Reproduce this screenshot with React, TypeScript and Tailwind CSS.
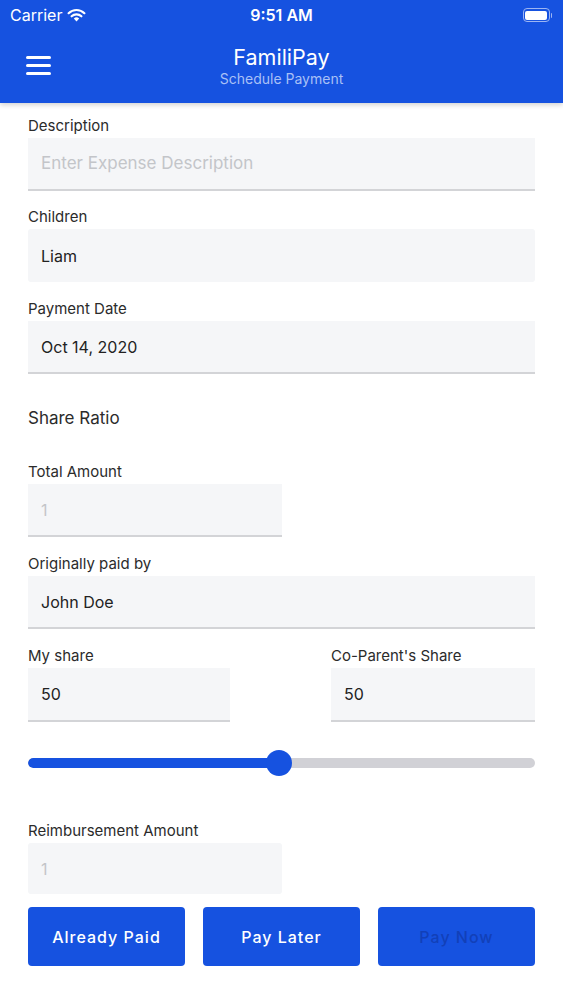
import React from "react";

function Field({
  label,
  value,
  placeholder,
  muted,
  border = true,
  className = "",
  inputW = "w-full",
  h = "h-[53px]",
}: {
  label: string;
  value?: string;
  placeholder?: string;
  muted?: boolean;
  border?: boolean;
  className?: string;
  inputW?: string;
  h?: string;
}) {
  return (
    <div className={className}>
      <div className="h-[20px] text-[15px] leading-[20px] text-[#2b2b2b]">{label}</div>
      <div
        className={`${inputW} mt-[2px] ${h} bg-[#f5f6f8] flex items-center pl-[13px] ${
          placeholder ? "text-[17px]" : "text-[16px]"
        } ${border ? "border-b-[2px] border-[#d3d4d7]" : "rounded-[3px]"} ${
          placeholder || muted ? "text-[#c3c5c9]" : "text-[#222222]"
        }`}
      >
        {value ?? placeholder}
      </div>
    </div>
  );
}

export default function App() {
  return (
    <div
      className="w-[563px] h-[1000px] bg-white overflow-hidden"
      style={{ fontFamily: "Inter, 'Noto Sans', sans-serif" }}
    >
      <header className="relative z-10 bg-[#1652e0] h-[103px] shadow-[0_2px_5px_rgba(0,0,0,0.18)] text-white">
        <div className="h-[30px] flex items-center justify-between px-[10px]">
          <div className="flex items-center gap-[5px] w-[120px]">
            <span className="text-[16px]">Carrier</span>
            <svg width="19" height="14" viewBox="0 0 19 14">
              <path d="M9.5 13.5 L6.8 10.6 A3.9 3.9 0 0 1 12.2 10.6 Z" fill="white" />
              <path d="M4.6 8.3 A7 7 0 0 1 14.4 8.3" stroke="white" strokeWidth="2.2" fill="none" strokeLinecap="round" />
              <path d="M1.6 5.2 A11.3 11.3 0 0 1 17.4 5.2" stroke="white" strokeWidth="2.2" fill="none" strokeLinecap="round" />
            </svg>
          </div>
          <span className="text-[16px] font-semibold">9:51 AM</span>
          <div className="w-[120px] flex justify-end pr-[1px]">
            <div className="flex items-center">
              <div className="w-[27px] h-[14px] rounded-[4px] border-[1.5px] border-[#9db5f2] p-[1.5px]">
                <div className="w-full h-full bg-white rounded-[2px]" />
              </div>
              <div className="w-[1.5px] h-[5px] bg-[#9db5f2] rounded-r ml-[1px]" />
            </div>
          </div>
        </div>
        <div className="relative h-[73px]">
          <div className="absolute left-[26px] top-[26px] flex flex-col gap-[5.5px]">
            <div className="w-[25px] h-[2.5px] bg-white rounded" />
            <div className="w-[25px] h-[2.5px] bg-white rounded" />
            <div className="w-[25px] h-[2.5px] bg-white rounded" />
          </div>
          <div className="flex flex-col items-center pt-[14px]">
            <div className="text-[21.5px] leading-[26px]">FamiliPay</div>
            <div className="text-[14px] leading-[18px] text-[#a9c0f6] mt-[0px]">Schedule Payment</div>
          </div>
        </div>
      </header>

      <main className="px-[28px] pt-[13px]">
        <Field label="Description" placeholder="Enter Expense Description" />
        <Field label="Children" value="Liam" border={false} className="mt-[16px]" />
        <Field label="Payment Date" value="Oct 14, 2020" className="mt-[17px]" />

        <div className="mt-[33px] h-[22px] text-[17px] leading-[22px] text-[#2b2b2b]">Share Ratio</div>

        <Field label="Total Amount" value="1" muted inputW="w-[254px]" className="mt-[33px]" />
        <Field label="Originally paid by" value="John Doe" className="mt-[17px]" />

        <div className="mt-[17px] flex justify-between">
          <Field label="My share" value="50" inputW="w-[202px]" h="h-[54px]" />
          <Field label="Co-Parent's Share" value="50" inputW="w-[204px]" h="h-[54px]" />
        </div>

        <div className="mt-[28px] relative h-[26px] flex items-center">
          <div className="w-full h-[10px] rounded-full bg-[#d1d1d6] overflow-hidden">
            <div className="h-full w-[252px] bg-[#1652e0] rounded-full" />
          </div>
          <div className="absolute left-[238px] top-0 w-[26px] h-[26px] rounded-full bg-[#1652e0]" />
        </div>

        <Field
          label="Reimbursement Amount"
          value="1"
          muted
          border={false}
          inputW="w-[254px]"
          h="h-[51px]"
          className="mt-[45px]"
        />

        <div className="mt-[13px] flex gap-[18px]">
          {[
            { t: "Already Paid", c: "text-white" },
            { t: "Pay Later", c: "text-white" },
            { t: "Pay Now", c: "text-[#1240b8]" },
          ].map((b) => (
            <div
              key={b.t}
              className={`flex-1 h-[59px] rounded-[4px] bg-[#1652e0] flex items-center justify-center text-[16px] font-medium tracking-[1px] ${b.c}`}
            >
              {b.t}
            </div>
          ))}
        </div>
      </main>
    </div>
  );
}
